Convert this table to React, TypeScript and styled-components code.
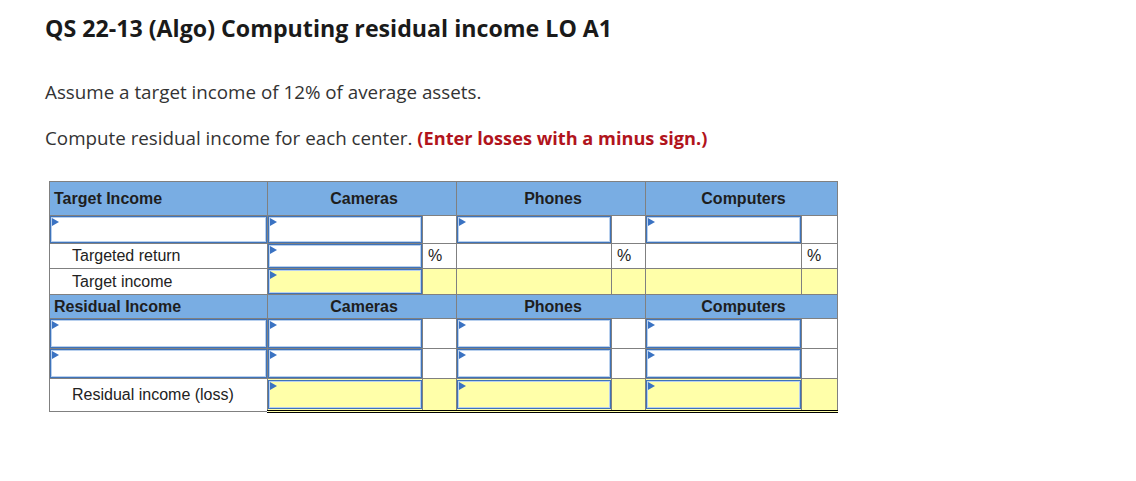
import React from "react";
import styled, { createGlobalStyle, css } from "styled-components";

const GlobalStyle = createGlobalStyle`
  html, body { margin: 0; padding: 0; background: #fff; }
  body { font-family: "Open Sans", "Liberation Sans", sans-serif; color: #222; }
`;

const Page = styled.div`
  padding: 14px 0 0 45px;
  width: 1136px;
  box-sizing: border-box;
`;

const Title = styled.h1`
  margin: 0;
  font-family: "Open Sans", sans-serif;
  font-weight: 700;
  font-size: 23.2px;
  line-height: 28px;
  color: #1a1a1a;
`;

const Para = styled.p`
  margin: 0;
  font-family: "Open Sans", sans-serif;
  font-size: 18.8px;
  line-height: 24px;
  color: #333;
  & + & { margin-top: 22px; }
`;

const Intro = styled.div`
  margin-top: 38px;
`;

const Note = styled.span`
  color: #b1141c;
  font-weight: 700;
  font-size: 18.2px;
`;

const Table = styled.table`
  margin: 31px 0 0 4px;
  border-collapse: collapse;
  table-layout: fixed;
  width: 788px;
  font-family: "Liberation Sans", Arial, sans-serif;
  font-size: 16px;
  color: #222;
`;

const HeadCell = styled.th<{ $align?: "left" | "center" }>`
  background: #79ade3;
  border: 1px solid #808080;
  font-weight: 700;
  text-align: ${(p) => p.$align ?? "center"};
  padding: 0 0 0 4px;
  color: #1e1e1e;
`;

const Row = styled.tr<{ $h: number }>`
  height: ${(p) => p.$h}px;
`;

const Cell = styled.td<{ $yellow?: boolean; $topBlack?: boolean; $bottomDouble?: boolean }>`
  border: 1px solid #808080;
  padding: 0;
  background: ${(p) => (p.$yellow ? "#ffffa9" : "#fff")};
  ${(p) => p.$topBlack && css`border-top: 1px solid #000;`}
  ${(p) => p.$bottomDouble && css`border-bottom: 3px double #000;`}
`;

const LabelCell = styled.td`
  border: 1px solid #808080;
  padding: 0 0 0 22px;
  background: #fff;
  color: #222;
`;

const PctCell = styled(Cell)`
  padding-left: 5px;
`;

const Field = styled.div<{ $yellow?: boolean; $h: number }>`
  position: relative;
  height: ${(p) => p.$h}px;
  box-sizing: border-box;
  border: 1px solid #3f73b9;
  box-shadow: inset 0 0 0 1px #b8d0ee;
  background: ${(p) => (p.$yellow ? "#ffffa9" : "#fff")};
  &::before {
    content: "";
    position: absolute;
    left: 1px;
    top: 1px;
    width: 0;
    height: 0;
    border-top: 4px solid transparent;
    border-bottom: 4px solid transparent;
    border-left: 7px solid #3a72c2;
  }
`;

type Col = "Cameras" | "Phones" | "Computers";
const cols: Col[] = ["Cameras", "Phones", "Computers"];

export default function App() {
  return (
    <>
      <GlobalStyle />
      <Page>
        <Title>QS 22-13 (Algo) Computing residual income LO A1</Title>
        <Intro>
          <Para>Assume a target income of 12% of average assets.</Para>
          <Para>
            Compute residual income for each center. <Note>(Enter losses with a minus sign.)</Note>
          </Para>
        </Intro>
        <Table>
          <colgroup>
            <col style={{ width: 218 }} />
            <col style={{ width: 155 }} />
            <col style={{ width: 34 }} />
            <col style={{ width: 155 }} />
            <col style={{ width: 34 }} />
            <col style={{ width: 156 }} />
            <col style={{ width: 36 }} />
          </colgroup>
          <tbody>
            <Row $h={34}>
              <HeadCell $align="left">Target Income</HeadCell>
              {cols.map((c) => (
                <HeadCell key={c} colSpan={2}>{c}</HeadCell>
              ))}
            </Row>
            <Row $h={28}>
              <Cell><Field $h={27} /></Cell>
              {cols.map((c) => (
                <React.Fragment key={c}>
                  <Cell><Field $h={27} /></Cell>
                  <Cell />
                </React.Fragment>
              ))}
            </Row>
            <Row $h={25}>
              <LabelCell>Targeted return</LabelCell>
              <Cell><Field $h={24} /></Cell>
              <PctCell>%</PctCell>
              <Cell />
              <PctCell>%</PctCell>
              <Cell />
              <PctCell>%</PctCell>
            </Row>
            <Row $h={26}>
              <LabelCell>Target income</LabelCell>
              <Cell $yellow $topBlack><Field $yellow $h={25} /></Cell>
              <Cell $yellow $topBlack />
              <Cell $yellow $topBlack />
              <Cell $yellow $topBlack />
              <Cell $yellow $topBlack />
              <Cell $yellow $topBlack />
            </Row>
            <Row $h={24}>
              <HeadCell $align="left">Residual Income</HeadCell>
              {cols.map((c) => (
                <HeadCell key={c} colSpan={2}>{c}</HeadCell>
              ))}
            </Row>
            {[0, 1].map((i) => (
              <Row $h={30} key={i}>
                <Cell><Field $h={29} /></Cell>
                {cols.map((c) => (
                  <React.Fragment key={c}>
                    <Cell><Field $h={29} /></Cell>
                    <Cell />
                  </React.Fragment>
                ))}
              </Row>
            ))}
            <Row $h={33}>
              <LabelCell>Residual income (loss)</LabelCell>
              {cols.map((c) => (
                <React.Fragment key={c}>
                  <Cell $yellow $topBlack $bottomDouble><Field $yellow $h={29} /></Cell>
                  <Cell $yellow $topBlack $bottomDouble />
                </React.Fragment>
              ))}
            </Row>
          </tbody>
        </Table>
      </Page>
    </>
  );
}
